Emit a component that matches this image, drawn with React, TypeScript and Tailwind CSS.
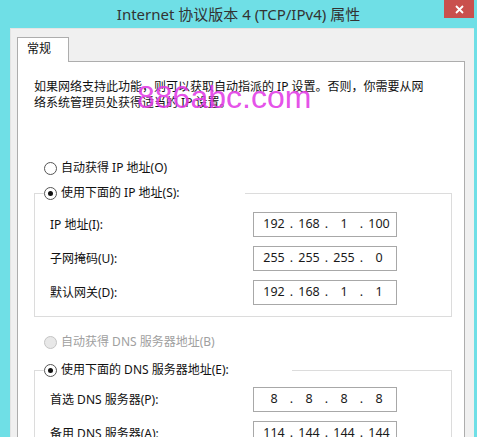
import React from "react";

const Radio = ({ checked, disabled }: { checked?: boolean; disabled?: boolean }) => (
  <span
    className={
      disabled
        ? "flex w-[13px] h-[13px] shrink-0 items-center justify-center rounded-full border border-[#c4c4c4] bg-[#e8e8e8]"
        : "flex w-[13px] h-[13px] shrink-0 items-center justify-center rounded-full border border-[#555] bg-white"
    }
  >
    {checked && <span className="block w-[5px] h-[5px] rounded-full bg-[#111]" />}
  </span>
);

const IpBox = ({ parts }: { parts: string[] }) => (
  <div className="flex h-[25px] w-[144px] items-center border border-[#a8a8a8] bg-white pl-[6px] text-[12.5px] text-[#1a1a1a] font-['Noto_Sans',sans-serif]">
    {parts.map((p, i) => (
      <React.Fragment key={i}>
        <span className="w-[28px] text-center">{p}</span>
        {i < 3 && <span className="w-[7px] text-center">.</span>}
      </React.Fragment>
    ))}
  </div>
);

const Row = ({ label, parts }: { label: string; parts: string[] }) => (
  <div className="flex items-center">
    <span className="w-[203px] text-[12px] text-[#111]">{label}</span>
    <IpBox parts={parts} />
  </div>
);

export default function App() {
  return (
    <div className="relative w-[477px] h-[437px] overflow-hidden bg-[#6fdfe6] font-['Noto_Sans','Noto_Sans_CJK_SC',sans-serif]">
      <div className="flex h-[28px] items-center justify-center text-[15px] text-[#333]">
        Internet 协议版本 4 (TCP/IPv4) 属性
      </div>
      <div className="absolute right-[3px] top-0 flex h-[18px] w-[30px] items-center justify-center bg-[#c9504d]">
        <svg width="9" height="9" viewBox="0 0 9 9">
          <path d="M1 1 L8 8 M8 1 L1 8" stroke="white" strokeWidth="1.8" />
        </svg>
      </div>

      <div className="ml-[10px] mr-[3px] h-[409px] border-l border-t border-[#e4e4e4] bg-[#f0f0f0] pl-[6px] pr-[9px] pt-[8px]">
        <div className="relative z-10 -mb-px h-[25px] w-[52px] border border-b-0 border-[#adadad] bg-white pl-[9px] pt-[3px] text-[12px] leading-[16px] text-[#111]">
          常规
        </div>
        <div className="h-[400px] border border-[#adadad] bg-white pl-[16px] pr-[12px] pt-[17px] text-[12px] text-[#111]">
          <div className="leading-[16px] whitespace-nowrap">
            <div>如果网络支持此功能，则可以获取自动指派的 IP 设置。否则，你需要从网</div>
            <div>络系统管理员处获得适当的 IP 设置。</div>
          </div>

          <div className="mt-[47px] flex h-[20px] items-center gap-[4px] pl-[10px]">
            <Radio />
            <span>自动获得 IP 地址(O)</span>
          </div>

          <fieldset className="mt-[5px] border border-[#dcdcdc]">
            <legend className="ml-[9px] flex h-[20px] w-[201px] items-center gap-[4px]">
              <Radio checked />
              <span>使用下面的 IP 地址(S):</span>
            </legend>
            <div className="flex flex-col gap-[9px] pb-[11px] pl-[15px] pt-[9px]">
              <Row label="IP 地址(I):" parts={["192", "168", "1", "100"]} />
              <Row label="子网掩码(U):" parts={["255", "255", "255", "0"]} />
              <Row label="默认网关(D):" parts={["192", "168", "1", "1"]} />
            </div>
          </fieldset>

          <div className="mt-[15px] flex h-[20px] items-center gap-[4px] pl-[10px] text-[#a0a0a0]">
            <Radio disabled />
            <span>自动获得 DNS 服务器地址(B)</span>
          </div>

          <fieldset className="mt-[8px] border border-[#dcdcdc]">
            <legend className="ml-[9px] flex h-[20px] w-[248px] items-center gap-[4px]">
              <Radio checked />
              <span>使用下面的 DNS 服务器地址(E):</span>
            </legend>
            <div className="flex flex-col gap-[9px] pb-[11px] pl-[15px] pt-[7px]">
              <Row label="首选 DNS 服务器(P):" parts={["8", "8", "8", "8"]} />
              <Row label="备用 DNS 服务器(A):" parts={["114", "144", "144", "144"]} />
            </div>
          </fieldset>
        </div>
      </div>

      <div className="pointer-events-none absolute left-[137px] top-[81px] text-[32px] leading-none text-[#e23be6]/90 font-['Liberation_Sans',sans-serif]">
        886abc.com
      </div>
    </div>
  );
}
